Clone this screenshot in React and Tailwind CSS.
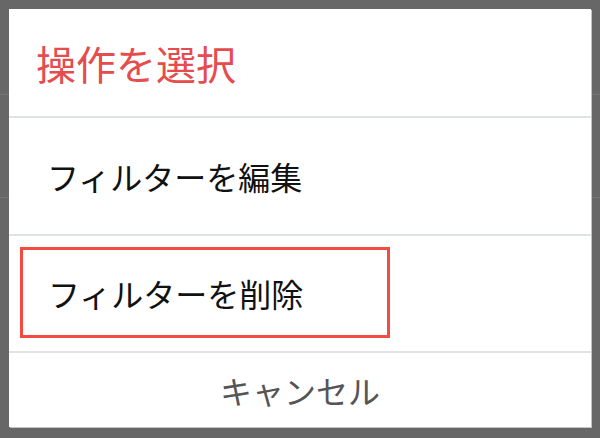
import React from "react";

export default function App() {
  const font = { fontFamily: '"Noto Sans CJK JP", "Noto Sans", sans-serif' };
  return (
    <div className="relative w-[600px] h-[438px] bg-[#676767] overflow-hidden" style={font}>
      {/* background list behind the overlay */}
      <div className="flex flex-col">
        <div className="h-[95px] border-b border-[#747474]" />
        <div className="h-[103px] border-b border-[#747474]" />
      </div>

      {/* dialog */}
      <div className="absolute left-[9px] top-[9px] w-[582px] h-[418px] bg-white flex flex-col shadow-[1px_1px_0_#c4c4c4]">
        <div className="h-[107px] flex items-center pl-[27px]">
          <span className="text-[40px] leading-none text-[#e64b4d]">操作を選択</span>
        </div>
        <div className="h-[2px] bg-[#dfe2e7]" />
        <div className="h-[116px] flex items-center pl-[38px]">
          <span className="text-[32px] leading-none text-[#111]">フィルターを編集</span>
        </div>
        <div className="h-[2px] bg-[#dfe2e7]" />
        <div className="h-[115px] flex items-start pl-[11px] pt-[11px]">
          <div className="w-[370px] h-[91px] border-[3px] border-[#f24c40] flex items-center pl-[25px]">
            <span className="text-[32px] leading-none text-[#111]">フィルターを削除</span>
          </div>
        </div>
        <div className="h-[2px] bg-[#dfe2e7]" />
        <div className="flex-1 flex items-center justify-center">
          <span className="text-[32px] leading-none text-[#555]">キャンセル</span>
        </div>
      </div>
    </div>
  );
}
